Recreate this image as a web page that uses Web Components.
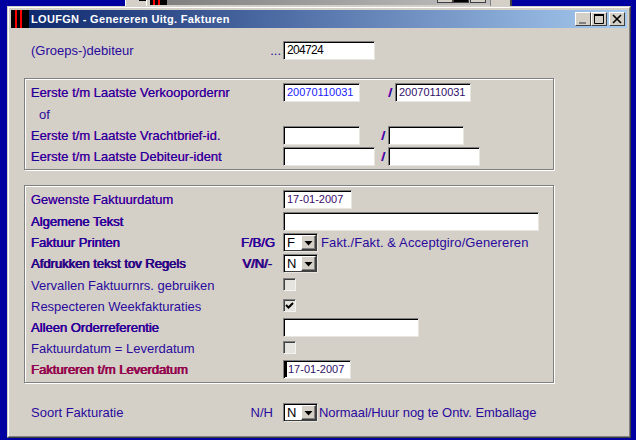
<!DOCTYPE html>
<html>
<head>
<meta charset="utf-8">
<title>LOUFGN</title>
<style>
  html, body { margin: 0; height: 100%; }
  body { background: #0000a0; overflow: hidden; }
  .after { margin-left: 3px; white-space: nowrap; letter-spacing: .11px; }
  .after.tight { margin-left: 1px; letter-spacing: -.06px; }
  .wide { font-size: 12px; letter-spacing: -.65px; }
</style>
</head>
<body>
<win-desktop>
  <back-window slot="back"></back-window>
  <app-window title="LOUFGN - Genereren Uitg. Fakturen">
    <form-row h="19" style="margin:13px 0 0 20px" label="(Groeps-)debiteur" hint="..." gap="2">
      <text-field w="92" ink="#000"><span class="wide">204724</span></text-field>
    </form-row>

    <form-group style="margin-top:18px">
      <form-row h="22" tone="mid" label="Eerste t/m Laatste Verkoopordernr">
        <text-field w="77" ink="#1a1aff">20070110031</text-field>
        <field-slash w="35"></field-slash>
        <text-field w="76" ink="#30106a">20070110031</text-field>
      </form-row>
      <form-row h="21" label="of" indent="8"></form-row>
      <form-row h="21" tone="mid" label="Eerste t/m Laatste Vrachtbrief-id.">
        <text-field w="77"></text-field>
        <field-slash w="28"></field-slash>
        <text-field w="76"></text-field>
      </form-row>
      <form-row h="19" tone="mid" label="Eerste t/m Laatste Debiteur-ident">
        <text-field w="92"></text-field>
        <field-slash w="13"></field-slash>
        <text-field w="92"></text-field>
      </form-row>
    </form-group>

    <form-group style="margin-top:15px">
      <form-row h="22" tone="mid" label="Gewenste Faktuurdatum">
        <text-field w="69" ink="#3a0a6a">17-01-2007</text-field>
      </form-row>
      <form-row h="21" tone="strong" label="Algemene Tekst">
        <text-field w="256"></text-field>
      </form-row>
      <form-row h="21" tone="strong" label="Faktuur Printen" hint="F/B/G" gap="8">
        <combo-box>F</combo-box>
        <span class="after">Fakt./Fakt. &amp; Acceptgiro/Genereren</span>
      </form-row>
      <form-row h="22" tone="heavy" label="Afdrukken tekst tov Regels" hint="V/N/-" gap="11">
        <combo-box>N</combo-box>
      </form-row>
      <form-row h="21" label="Vervallen Faktuurnrs. gebruiken">
        <check-box></check-box>
      </form-row>
      <form-row h="21" label="Respecteren Weekfakturaties">
        <check-box checked></check-box>
      </form-row>
      <form-row h="21" tone="strong" label="Alleen Orderreferentie">
        <text-field w="136"></text-field>
      </form-row>
      <form-row h="21" label="Faktuurdatum = Leverdatum">
        <check-box></check-box>
      </form-row>
      <form-row h="19" tone="red" label="Faktureren t/m Leverdatum">
        <text-field w="68" ink="#30106a" caret>17-01-2007</text-field>
      </form-row>
    </form-group>

    <form-row h="19" style="margin:20px 0 0 20px" label="Soort Fakturatie" hint="N/H" gap="10">
      <combo-box>N</combo-box>
      <span class="after tight">Normaal/Huur nog te Ontv. Emballage</span>
    </form-row>
  </app-window>
</win-desktop>

<script>
class WinDesktop extends HTMLElement {
  constructor() {
    super();
    this.attachShadow({ mode: 'open' });
    this.shadowRoot.innerHTML = `
      <style>
        :host { display: block; position: relative; width: 636px; height: 440px; background: #0000a0; overflow: hidden; }
      </style>
      <slot name="back"></slot>
      <slot></slot>
    `;
  }
}

// the window behind, only its lower title edge shows
class BackWindow extends HTMLElement {
  constructor() {
    super();
    this.attachShadow({ mode: 'open' });
    this.shadowRoot.innerHTML = `
      <style>
        :host { position: absolute; left: 125px; top: 0; width: 387px; height: 10px; box-sizing: border-box; background: #d4d0c8; border-right: 2px solid #404040; overflow: hidden; border-left: 1px solid #fff; }
        .mark { position: absolute; left: 13px; top: 0; width: 7px; height: 1px; background: #000; }
        .line { position: absolute; left: 20px; top: 0; width: 1px; height: 6px; background: #fff; }
        .logo { position: absolute; left: 24px; top: 0; width: 17px; height: 5px; background: #000; }
        .logo i { position: absolute; top: 0; width: 2px; height: 5px; background: #f00; }
        .bar { position: absolute; left: 41px; top: 0; width: 323px; height: 5px; background: linear-gradient(90deg, #808080, #c0c0c0); overflow: hidden; }
        .bar span { position: absolute; left: 3px; top: -10px; font: bold 11px "Liberation Sans", Arial, sans-serif; color: #d4d0c8; white-space: nowrap; letter-spacing: .8px; }
        .btn { position: absolute; top: 0; width: 16px; height: 3px; box-sizing: border-box; background: #d4d0c8; border: 1px solid #404040; border-top: 0; }
        .sep { position: absolute; left: 364px; top: 0; width: 1px; height: 6px; background: #808080; }
      </style>
      <div class="mark"></div>
      <div class="line"></div>
      <div class="logo"><i style="left:3px"></i><i style="left:8px"></i></div>
      <div class="bar"><span>20707 - Vakkeren</span></div>
      <div class="btn" style="left:311px"></div>
      <div class="btn" style="left:327px;background:#000"></div>
      <div class="btn" style="left:344px"></div>
      <div class="sep"></div>
    `;
  }
}

class AppWindow extends HTMLElement {
  constructor() {
    super();
    this.attachShadow({ mode: 'open' });
    this.shadowRoot.innerHTML = `
      <style>
        :host {
          position: absolute; left: 7px; top: 6px; width: 624px; height: 432px;
          box-sizing: border-box; background: #d4d0c8;
          border: 1px solid; border-color: #d4d0c8 #404040 #404040 #d4d0c8;
          font: 13px "Liberation Sans", Arial, sans-serif; color: #2a0a9c;
        }
        .inner { box-sizing: border-box; height: 100%; border: 1px solid; border-color: #fff #808080 #808080 #fff; padding: 2px; }
        .bar {
          height: 18px; display: flex; align-items: center;
          background: linear-gradient(90deg, #0a246a, #a6caf0);
          color: #fff; font-weight: bold; font-size: 11px; letter-spacing: .32px;
        }
        .logo { width: 18px; height: 18px; margin-right: 2px; }
        .name { flex: 1; }
        .buttons { display: flex; margin-right: 2px; }
        .btn {
          width: 16px; height: 14px; box-sizing: border-box; background: #d4d0c8;
          border: 1px solid; border-color: #fff #404040 #404040 #fff; display: block;
        }
        .btn.max { margin-right: 2px; }
      </style>
      <div class="inner">
        <div class="bar">
          <svg class="logo" viewBox="0 0 18 18"><rect width="18" height="18" fill="#000"/><rect x="4" y="0" width="2" height="18" fill="#f00"/><rect x="9" y="0" width="2" height="18" fill="#f00"/></svg>
          <span class="name"></span>
          <div class="buttons">
            <svg class="btn" viewBox="0 0 14 12"><rect x="3" y="9" width="7" height="2" fill="#808080"/></svg>
            <svg class="btn max" viewBox="0 0 14 12"><path d="M2.5 1.5h9v9h-9z" fill="none" stroke="#000"/><rect x="2" y="1" width="10" height="2" fill="#000"/></svg>
            <svg class="btn" viewBox="0 0 14 12"><path d="M3 2l8 8M11 2l-8 8" stroke="#000" stroke-width="1.6" fill="none"/></svg>
          </div>
        </div>
        <slot></slot>
      </div>
    `;
  }
  connectedCallback() {
    this.shadowRoot.querySelector('.name').textContent = this.getAttribute('title');
  }
}

class FormGroup extends HTMLElement {
  constructor() {
    super();
    this.attachShadow({ mode: 'open' });
    this.shadowRoot.innerHTML = `
      <style>
        :host {
          display: block; box-sizing: border-box; width: 530px; margin-left: 13px;
          padding: 4px 0 3px 6px; border: 1px solid #808080;
          box-shadow: 1px 1px 0 #fff, inset 1px 1px 0 #fff;
        }
      </style>
      <slot></slot>
    `;
  }
}

class FormRow extends HTMLElement {
  constructor() {
    super();
    this.attachShadow({ mode: 'open' });
    this.shadowRoot.innerHTML = `
      <style>
        :host { display: block; white-space: nowrap; }
        .line { display: flex; height: 19px; align-items: center; }
        .left { width: 252px; flex: none; display: flex; justify-content: space-between; box-sizing: border-box; }
        :host([tone=mid]) .left { text-shadow: -.3px 0 0 #b010b0; color: #1a0498; }
        :host([tone=strong]) .left { text-shadow: .35px 0 0 #2a0a9c, -.3px 0 0 #b810a0; color: #1c0498; }
        :host([tone=heavy]) .left { text-shadow: .6px 0 0 #24088a, -.3px 0 0 #a010a0; color: #180480; }
        :host([tone=red]) .left { text-shadow: .6px 0 0 #8a0040, -.3px 0 0 #c03060; color: #900050; }
      </style>
      <div class="line">
        <div class="left"><span class="label"></span><span class="hint"></span></div>
        <slot></slot>
      </div>
    `;
  }
  connectedCallback() {
    const label = this.shadowRoot.querySelector('.label');
    const hint = this.shadowRoot.querySelector('.hint');
    label.textContent = this.getAttribute('label');
    label.style.marginLeft = (this.getAttribute('indent') || 0) + 'px';
    hint.textContent = this.getAttribute('hint') || '';
    hint.style.marginRight = (this.getAttribute('gap') || 0) + 'px';
    this.style.height = this.getAttribute('h') + 'px';
  }
}

class TextField extends HTMLElement {
  constructor() {
    super();
    this.attachShadow({ mode: 'open' });
    this.shadowRoot.innerHTML = `
      <style>
        :host {
          display: block; flex: none; box-sizing: border-box; height: 19px; padding-left: 3px;
          background: #fff; border: 1px solid; border-color: #808080 #e8e6e0 #e8e6e0 #808080;
          box-shadow: inset 1px 1px 0 #000; font-size: 11px; line-height: 17px; overflow: hidden; position: relative;
        }
        .caret { position: absolute; left: 1px; top: 1px; width: 2px; height: 15px; background: #000; display: none; }
        :host([caret]) .caret { display: block; }
        :host([caret]) { padding-left: 4px; }
      </style>
      <div class="caret"></div>
      <slot></slot>
    `;
  }
  connectedCallback() {
    this.style.width = this.getAttribute('w') + 'px';
    this.style.color = this.getAttribute('ink') || '#000';
  }
}

class FieldSlash extends HTMLElement {
  constructor() {
    super();
    this.attachShadow({ mode: 'open' });
    this.shadowRoot.innerHTML = `
      <style>
        :host { display: block; flex: none; box-sizing: border-box; padding-right: 3px; text-align: right; color: #2008a0; text-shadow: -.5px 0 0 #c010c0, .4px 0 0 #2008a0; }
      </style>
      /
    `;
  }
  connectedCallback() {
    this.style.width = this.getAttribute('w') + 'px';
  }
}

class ComboBox extends HTMLElement {
  constructor() {
    super();
    this.attachShadow({ mode: 'open' });
    this.shadowRoot.innerHTML = `
      <style>
        :host {
          display: flex; flex: none; box-sizing: border-box; width: 35px; height: 19px; padding-left: 3px;
          background: #fff; color: #000; border: 1px solid; border-color: #808080 #e8e6e0 #e8e6e0 #808080;
          box-shadow: inset 1px 1px 0 #000, inset -1px -1px 0 #404040; font-size: 13px; line-height: 17px; text-shadow: none;
        }
        .text { flex: 1; }
        .btn {
          width: 15px; height: 15px; margin: 1px 1px 0 0; box-sizing: border-box; background: #d4d0c8;
          border: 1px solid; border-color: #fff #404040 #404040 #fff; box-shadow: inset -1px -1px 0 #808080; display: block;
        }
      </style>
      <span class="text"><slot></slot></span>
      <svg class="btn" viewBox="0 0 13 13"><path d="M2.5 5h8l-4 4.5z" fill="#000"/></svg>
    `;
  }
}

class CheckBox extends HTMLElement {
  constructor() {
    super();
    this.attachShadow({ mode: 'open' });
    this.shadowRoot.innerHTML = `
      <style>
        :host {
          display: block; flex: none; align-self: flex-start; margin-top: 2px; box-sizing: border-box; width: 13px; height: 13px;
          background: #e6e4de; border: 1px solid; border-color: #808080 #f4f3f0 #f4f3f0 #808080;
          box-shadow: inset 1px 1px 0 #404040;
        }
        svg { display: none; width: 11px; height: 11px; }
        :host([checked]) svg { display: block; }
      </style>
      <svg viewBox="0 0 11 11"><path d="M2 5l2.5 2.5L9 3" fill="none" stroke="#000" stroke-width="2"/></svg>
    `;
  }
}

customElements.define('win-desktop', WinDesktop);
customElements.define('back-window', BackWindow);
customElements.define('app-window', AppWindow);
customElements.define('form-group', FormGroup);
customElements.define('form-row', FormRow);
customElements.define('text-field', TextField);
customElements.define('field-slash', FieldSlash);
customElements.define('combo-box', ComboBox);
customElements.define('check-box', CheckBox);
</script>
</body>
</html>
